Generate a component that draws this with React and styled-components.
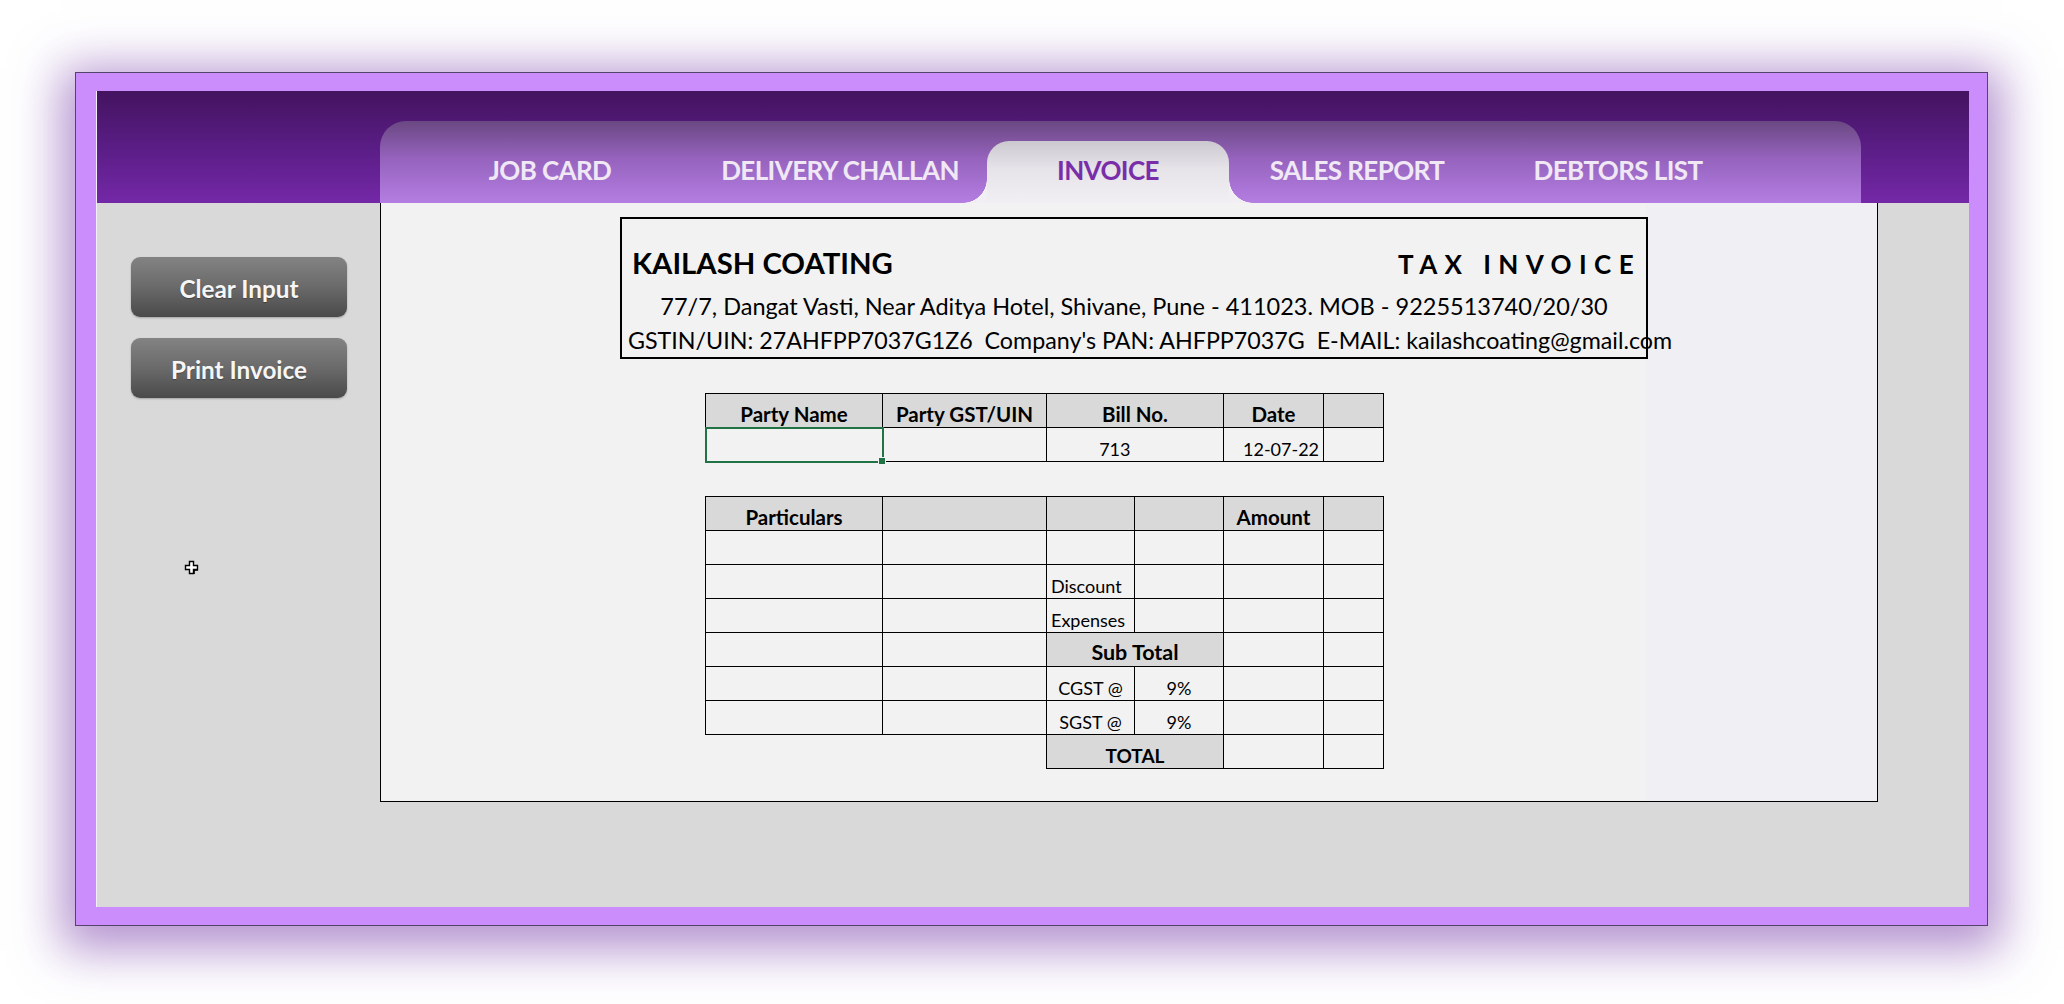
import React from 'react';
import styled, { createGlobalStyle } from 'styled-components';

const GlobalStyle = createGlobalStyle`
  html, body { margin: 0; padding: 0; background: #ffffff; }
  body { font-family: Lato, "Open Sans", sans-serif; }
  * { box-sizing: border-box; }
`;

const Page = styled.div`
  width: 2064px;
  height: 1004px;
  padding: 72px 0 0 75px;
  overflow: hidden;
`;

const Frame = styled.div`
  width: 1913px;
  height: 854px;
  background: #cc8dfc;
  border: 1px solid #55446a;
  padding: 18px 18px 18px 20px;
  box-shadow: 0 10px 45px 14px rgba(118, 58, 168, 0.55);
  display: flex;
`;

const Inner = styled.div`
  flex: 1;
  display: flex;
  flex-direction: column;
  border-left: 1px solid #f4eefa;
`;

const Header = styled.div`
  height: 112px;
  flex: none;
  background: linear-gradient(180deg, #43135f 0%, #5a1d85 50%, #7428a7 100%);
  padding: 30px 0 0 283px;
`;

const TabStrip = styled.div`
  width: 1481px;
  height: 82px;
  border-radius: 26px 26px 0 0;
  background: linear-gradient(180deg, #6a4882 0%, #9562bd 45%, #b47ee2 100%);
  display: flex;
  align-items: flex-end;
  padding-left: 27px;
`;

const Tab = styled.div`
  position: relative;
  width: ${p => p.$w}px;
  height: 62px;
  display: flex;
  align-items: center;
  justify-content: center;
  font-size: 26px;
  font-weight: 700;
  letter-spacing: -0.6px;
  color: ${p => (p.$active ? '#7a2da8' : '#f1e8f6')};
  padding-bottom: 4px;
  ${p =>
    p.$active &&
    `
    background: linear-gradient(180deg, #ccc8cf 0%, #e6e3e9 45%, #f1eff4 100%);
    border-radius: 22px 22px 0 0;
    &::before, &::after {
      content: '';
      position: absolute;
      bottom: 0;
      width: 24px;
      height: 24px;
    }
    &::before {
      left: -24px;
      background: radial-gradient(circle at 0 0, transparent 23.5px, #f1eff4 24px);
    }
    &::after {
      right: -24px;
      background: radial-gradient(circle at 100% 0, transparent 23.5px, #f1eff4 24px);
    }
  `}
`;

const Body = styled.div`
  flex: 1;
  display: flex;
  background: #d9d9d9;
`;

const Sidebar = styled.div`
  position: relative;
  width: 283px;
  flex: none;
  padding: 54px 0 0 34px;
  display: flex;
  flex-direction: column;
  gap: 21px;
`;

const SideButton = styled.div`
  width: 216px;
  height: 60px;
  border-radius: 9px;
  background: linear-gradient(180deg, #838383 0%, #6a6a6a 50%, #4a4a4a 100%);
  color: #f6f6f6;
  font-size: 24.3px;
  font-weight: 700;
  display: flex;
  align-items: center;
  justify-content: center;
  padding-top: 2px;
  text-shadow: 0 1px 1px rgba(0, 0, 0, 0.3);
  box-shadow: 0 1px 2px rgba(0, 0, 0, 0.25);
`;

const CursorMark = styled.svg`
  position: absolute;
  left: 87px;
  top: 357px;
`;

const Panel = styled.div`
  width: 1498px;
  height: 599px;
  flex: none;
  border: 1px solid #000;
  border-top: none;
  background: linear-gradient(90deg, #f2f2f2 0, #f2f2f2 1265px, #f0eff4 1265px);
  padding: 14px 0 0 239px;
  display: flex;
  flex-direction: column;
  align-items: flex-start;
`;

const InvoiceHead = styled.div`
  width: 1028px;
  height: 142px;
  border: 2px solid #000;
  padding-top: 26px;
  flex: none;
`;

const TitleRow = styled.div`
  display: flex;
  justify-content: space-between;
  align-items: baseline;
  padding: 0 5px 0 10px;
  line-height: 1.2;
`;

const Company = styled.div`
  font-size: 29.3px;
  font-weight: 700;
  color: #000;
`;

const DocTitle = styled.div`
  font-size: 26px;
  font-weight: 700;
  letter-spacing: 7.4px;
  color: #000;
`;

const InfoLine = styled.div`
  font-size: ${p => p.$fs}px;
  line-height: 1.2;
  color: #000;
  white-space: nowrap;
  margin-top: ${p => p.$mt}px;
  text-align: ${p => (p.$center ? 'center' : 'left')};
  padding-left: ${p => (p.$center ? 0 : 6)}px;
`;

const Grid = styled.table`
  border-collapse: collapse;
  table-layout: fixed;
  width: 678px;
  margin: ${p => p.$mt}px 0 0 85px;
  font-size: 18px;
  color: #000;
`;

const Col = styled.col`
  width: ${p => p.$w}px;
`;

const Row = styled.tr`
  height: 34px;
`;

const Cell = styled.td`
  position: relative;
  border: 1px solid #000;
  padding: 0 4px 0;
  vertical-align: bottom;
  line-height: 1.2;
  white-space: nowrap;
  overflow: visible;
  background: ${p => (p.$gray ? '#d9d9d9' : 'transparent')};
  font-weight: ${p => (p.$bold ? 700 : 400)};
  font-size: ${p => (p.$fs ? `${p.$fs}px` : p.$bold ? '20.5px' : '18px')};
  text-align: ${p => p.$align || 'center'};
  ${p => p.$hideRight && 'border-right: hidden;'}
  ${p => p.$blank && 'border-left: hidden; border-bottom: hidden;'}
  ${p =>
    p.$selected &&
    `
    outline: 2px solid #217346;
    outline-offset: -1px;
    &::after {
      content: '';
      position: absolute;
      right: -4px;
      bottom: -4px;
      width: 6px;
      height: 6px;
      background: #217346;
      border: 1px solid #f2f2f2;
    }
  `}
`;

const tabs = [
  { label: 'JOB CARD', w: 286 },
  { label: 'DELIVERY CHALLAN', w: 294 },
  { label: 'INVOICE', w: 242, active: true },
  { label: 'SALES REPORT', w: 256 },
  { label: 'DEBTORS LIST', w: 266 },
];

const colsMain = [177, 164, 88, 89, 100, 60];

const itemRows = [
  { c3: '', c4: '', c3Align: 'left' },
  { c3: 'Discount', c4: '', c3Align: 'left' },
  { c3: 'Expenses', c4: '', c3Align: 'left' },
  { sub: 'Sub Total' },
  { c3: 'CGST @', c4: '9%' },
  { c3: 'SGST @', c4: '9%' },
];

export default function App() {
  return (
    <>
      <GlobalStyle />
      <Page>
        <Frame>
          <Inner>
            <Header>
              <TabStrip>
                {tabs.map(t => (
                  <Tab key={t.label} $w={t.w} $active={t.active}>
                    {t.label}
                  </Tab>
                ))}
              </TabStrip>
            </Header>
            <Body>
              <Sidebar>
                <SideButton>Clear Input</SideButton>
                <SideButton>Print Invoice</SideButton>
                <CursorMark width="16" height="16" viewBox="0 0 16 16">
                  <path
                    d="M5.5 1.5 H9.5 V5.5 H13.5 V9.5 H9.5 V13.5 H5.5 V9.5 H1.5 V5.5 H5.5 Z"
                    fill="#ffffff"
                    stroke="#000"
                    strokeWidth="1.4"
                  />
                  <path d="M10 14 V10 H14" fill="none" stroke="#000" strokeWidth="1.6" />
                </CursorMark>
              </Sidebar>
              <Panel>
                <InvoiceHead>
                  <TitleRow>
                    <Company>KAILASH COATING</Company>
                    <DocTitle>TAX INVOICE</DocTitle>
                  </TitleRow>
                  <InfoLine $center $fs={23.5} $mt={12}>
                    77/7, Dangat Vasti, Near Aditya Hotel, Shivane, Pune - 411023. MOB - 9225513740/20/30
                  </InfoLine>
                  <InfoLine $fs={23.25} $mt={7}>
                    GSTIN/UIN: 27AHFPP7037G1Z6&nbsp; Company's PAN: AHFPP7037G&nbsp; E-MAIL: kailashcoating@gmail.com
                  </InfoLine>
                </InvoiceHead>

                <Grid $mt={34}>
                  <colgroup>
                    {colsMain.map((w, i) => (
                      <Col key={i} $w={w} />
                    ))}
                  </colgroup>
                  <tbody>
                    <Row>
                      <Cell as="th" $gray $bold>Party Name</Cell>
                      <Cell as="th" $gray $bold>Party GST/UIN</Cell>
                      <Cell as="th" $gray $bold colSpan={2}>Bill No.</Cell>
                      <Cell as="th" $gray $bold>Date</Cell>
                      <Cell as="th" $gray />
                    </Row>
                    <Row>
                      <Cell $selected />
                      <Cell />
                      <Cell $align="right" $hideRight>713</Cell>
                      <Cell />
                      <Cell $align="right">12-07-22</Cell>
                      <Cell />
                    </Row>
                  </tbody>
                </Grid>

                <Grid $mt={34}>
                  <colgroup>
                    {colsMain.map((w, i) => (
                      <Col key={i} $w={w} />
                    ))}
                  </colgroup>
                  <tbody>
                    <Row>
                      <Cell as="th" $gray $bold>Particulars</Cell>
                      <Cell as="th" $gray />
                      <Cell as="th" $gray />
                      <Cell as="th" $gray />
                      <Cell as="th" $gray $bold>Amount</Cell>
                      <Cell as="th" $gray />
                    </Row>
                    {itemRows.map((r, i) => (
                      <Row key={i}>
                        <Cell />
                        <Cell />
                        {r.sub ? (
                          <Cell $gray $bold $fs={21.5} colSpan={2}>{r.sub}</Cell>
                        ) : (
                          <>
                            <Cell $align={r.c3Align}>{r.c3}</Cell>
                            <Cell>{r.c4}</Cell>
                          </>
                        )}
                        <Cell />
                        <Cell />
                      </Row>
                    ))}
                    <Row>
                      <Cell $blank colSpan={2} />
                      <Cell $gray $bold $fs={19} colSpan={2}>TOTAL</Cell>
                      <Cell />
                      <Cell />
                    </Row>
                  </tbody>
                </Grid>
              </Panel>
            </Body>
          </Inner>
        </Frame>
      </Page>
    </>
  );
}
